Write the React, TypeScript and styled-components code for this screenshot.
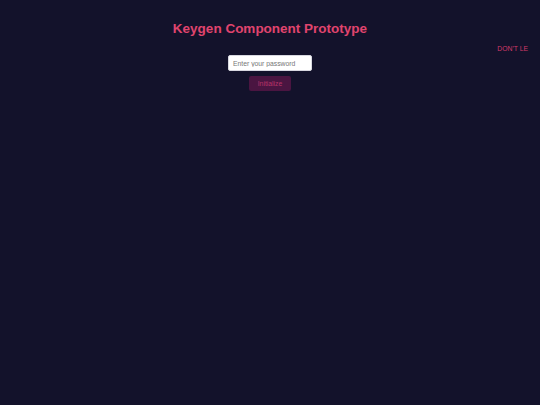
import React, { useState } from 'react'
import styled, { createGlobalStyle } from 'styled-components'

const GlobalStyle = createGlobalStyle`
  html, body {
    margin: 0;
    padding: 0;
    background: #13122b;
    font-family: "Liberation Sans", Arial, sans-serif;
  }
`

const Page = styled.div`
  min-height: 405px;
  background: #13122b;
  position: relative;
  display: flex;
  flex-direction: column;
  align-items: center;
  padding-top: 20px;
  box-sizing: border-box;
`

const Title = styled.h1`
  margin: 0;
  color: #e0446e;
  font-size: 13.5px;
  font-weight: 700;
  line-height: 17px;
`

const Warning = styled.div`
  position: absolute;
  top: 44px;
  right: 12px;
  color: #d23a6a;
  font-size: 6.8px;
  line-height: 10px;
  text-transform: uppercase;
`

const Form = styled.div`
  margin-top: 18px;
  display: flex;
  flex-direction: column;
  align-items: center;
  gap: 5px;
`

const PasswordInput = styled.input`
  width: 84px;
  height: 16px;
  box-sizing: border-box;
  border: 1px solid #d8d8e0;
  border-radius: 2px;
  background: #ffffff;
  padding: 0 4px;
  font-family: "Liberation Sans", Arial, sans-serif;
  font-size: 6.8px;
  color: #333;
  outline: none;

  &::placeholder {
    color: #777;
  }
`

const InitButton = styled.button`
  width: 42px;
  height: 15px;
  border: none;
  border-radius: 2px;
  background: #4a1541;
  color: #b8346a;
  font-family: "Liberation Sans", Arial, sans-serif;
  font-size: 6.8px;
  padding: 0;
  cursor: pointer;
`

export default function App() {
  const [password, setPassword] = useState('')

  return (
    <>
      <GlobalStyle />
      <Page>
        <Title>Keygen Component Prototype</Title>
        <Warning>Don't le</Warning>
        <Form>
          <PasswordInput
            type="password"
            placeholder="Enter your password"
            value={password}
            onChange={(e) => setPassword(e.target.value)}
          />
          <InitButton>Initialize</InitButton>
        </Form>
      </Page>
    </>
  )
}
